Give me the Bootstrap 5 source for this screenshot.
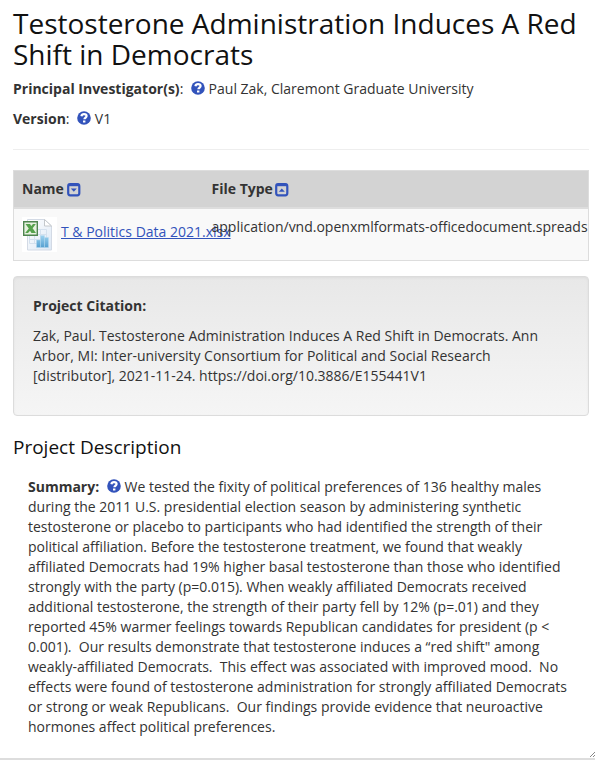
<!DOCTYPE html>
<html lang="en">
<head>
<meta charset="utf-8">
<meta name="viewport" content="width=device-width, initial-scale=1">
<title>Testosterone Administration Induces A Red Shift in Democrats</title>
<link href="https://cdn.jsdelivr.net/npm/bootstrap@5.3.0/dist/css/bootstrap.min.css" rel="stylesheet">
<style>
body { font-family: "Open Sans", sans-serif; font-size: 14px; line-height: 20px; color: #333; }
a { color: #3253bb; }
.project-page { padding: 8px 6px 21px 13px; border-bottom: 2px solid #ddd; }
.project-title { font-size: 28px; line-height: 31px; color: #111; margin-bottom: 9px; font-weight: 400; }
.meta-line { margin-bottom: 10px; }
.help-link svg { width: 14px; height: 14px; vertical-align: -1px; }
.help-link { margin-left: 4px; }
.divider { border-top: 1px solid #eee; opacity: 1; margin: 20px 0; }
.file-table { table-layout: fixed; border: 1px solid #ddd; margin-bottom: 15px; color: #333; white-space: nowrap; }
.file-table > thead > tr > th { background: #d3d3d3; padding: 8px; border-bottom: 2px solid #ddd; line-height: 20px; }
.file-table > tbody > tr > td { background: #f9f9f9; color: #333; padding: 8px; border: 0; }
.name-col { width: 190px; }
.sort-btn { line-height: 1; margin-left: -1px; }
.sort-btn svg { display: block; width: 14px; height: 14px; }
.file-icon { width: 35px; height: 35px; }
.citation { padding: 19px 19px 29px; border: 1px solid #dcdcdc; border-radius: 4px; background: linear-gradient(#e8e8e8, #f5f5f5); box-shadow: inset 0 1px 3px rgba(0,0,0,.05), 0 1px 0 rgba(255,255,255,.1); margin-bottom: 20px; }
.section-title { font-size: 19px; line-height: 22px; color: #111; font-weight: 400; margin-bottom: 19px; }
.summary { padding: 0 15px; }
.resize-grip { right: 0; bottom: 1px; width: 6px; height: 6px; }
</style>
</head>
<body>
<svg class="d-none" aria-hidden="true">
  <symbol id="help" viewBox="0 0 14 14"><circle cx="7" cy="7" r="6.8" fill="#3253bb"/><path d="M4.400 5.200C4.700 3.700 5.700 3.200 7 3.200c1.600 0 2.600.7 2.600 1.900 0 1.700-2.200 1.600-2.200 3.200" fill="none" stroke="#fff" stroke-width="2.200"/><path d="M6 9.500h2.400v2H6z" fill="#fff"/></symbol>
</svg>
<main class="project-page position-relative">
  <h1 class="project-title">Testosterone Administration Induces A Red Shift in Democrats</h1>
  <div class="meta-line"><strong>Principal Investigator(s)</strong>: <a class="help-link" href="#" aria-label="About principal investigators"><svg><use href="#help"/></svg></a> Paul Zak, Claremont Graduate University</div>
  <div class="meta-line"><strong>Version</strong>: <a class="help-link" href="#" aria-label="About version"><svg><use href="#help"/></svg></a> V1</div>
  <hr class="divider">
  <table class="table file-table">
    <thead>
      <tr>
        <th scope="col" class="name-col">Name <button type="button" class="btn p-0 border-0 sort-btn" aria-label="Sort by name descending"><svg viewBox="0 0 14 14"><rect x="1.200" y="1.200" width="11.100" height="11.100" rx="2" fill="none" stroke="#3253bb" stroke-width="2.200"/><path d="M1.500 2h10.500" stroke="#3253bb" stroke-width="2.400"/><path d="M3.800 5.500h6L6.800 8.700z" fill="#3253bb"/></svg></button></th>
        <th scope="col">File Type <button type="button" class="btn p-0 border-0 sort-btn" aria-label="Sort by file type ascending"><svg viewBox="0 0 14 14"><rect x="1.200" y="1.200" width="11.100" height="11.100" rx="2" fill="none" stroke="#3253bb" stroke-width="2.200"/><path d="M1.500 2h10.500" stroke="#3253bb" stroke-width="2.400"/><path d="M3.800 8.700h6L6.800 5.500z" fill="#3253bb"/></svg></button></th>
      </tr>
    </thead>
    <tbody>
      <tr>
        <td><div class="d-flex align-items-start gap-1"><svg class="file-icon flex-shrink-0" viewBox="0 0 35 35" aria-hidden="true">
          <defs><linearGradient id="bars" x2="0" y2="1"><stop stop-color="#9ed3f0"/><stop offset="1" stop-color="#549fd0"/></linearGradient><linearGradient id="sheet" x2="1" y2="1"><stop stop-color="#fff"/><stop offset="1" stop-color="#dde8f5"/></linearGradient></defs>
          <path d="M0 0h35v35H0z" fill="#fff"/>
          <path d="M5.500 2.500h17l7 6.500v24h-24z" fill="url(#sheet)" stroke="#d3dae5"/>
          <path d="M22.500 2.500v6.500h7z" fill="#fff" stroke="#c4c8cc"/>
          <path d="M7.500 12.500h17v14h-17zM7.500 17.500h17M7.500 22.500h17M18.500 12v14M12.500 12v14" fill="none" stroke="#d5e1ee"/>
          <path d="M14.500 23h4v7.500h-4zM18.500 18.500h4v12h-4zM22.500 20.500h4v10h-4z" fill="url(#bars)" stroke="#b9dcf0" stroke-width=".4"/>
          <path d="M1.700 4.700h13.600v13.600H1.700z" fill="#e6f1df" stroke="#4f8550" stroke-width="1.400"/>
          <path d="M3.500 7h4.500l1.300 2L11 7h2.800l-3.200 4.200 3.400 4.800H9.500l-1.500-2.300L6 16H3.200l3.600-4.600z" fill="#55a24c"/>
        </svg><a class="mt-1 pt-1 lh-1" href="#">T &amp; Politics Data 2021.xlsx</a></div></td>
        <td>application/vnd.openxmlformats-officedocument.spreads</td>
      </tr>
    </tbody>
  </table>
  <section class="citation">
    <div class="meta-line fw-bold">Project Citation:</div>
    <div>Zak, Paul. Testosterone Administration Induces A Red Shift in Democrats. Ann Arbor, MI: Inter-university Consortium for Political and Social Research [distributor], 2021-11-24. https://doi.org/10.3886/E155441V1</div>
  </section>
  <h2 class="section-title">Project Description</h2>
  <div class="summary"><strong>Summary:</strong> <a class="help-link" href="#" aria-label="About summary"><svg><use href="#help"/></svg></a> We tested the fixity of political preferences of 136 healthy males during the 2011 U.S. presidential election season by administering synthetic testosterone or placebo to participants who had identified the strength of their political affiliation. Before the testosterone treatment, we found that weakly affiliated Democrats had 19% higher basal testosterone than those who identified strongly with the party (p=0.015). When weakly affiliated Democrats received additional testosterone, the strength of their party fell by 12% (p=.01) and they reported 45% warmer feelings towards Republican candidates for president (p &lt; 0.001).&nbsp; Our results demonstrate that testosterone induces a “red shift" among weakly-affiliated Democrats.&nbsp; This effect was associated with improved mood.&nbsp; No effects were found of testosterone administration for strongly affiliated Democrats or strong or weak Republicans.&nbsp; Our findings provide evidence that neuroactive hormones affect political preferences.</div>
  <svg class="resize-grip position-absolute" viewBox="0 0 6 6" aria-hidden="true"><path d="M1 6l5-5M4 6l2-2" stroke="#888" fill="none"/></svg>
</main>
<script src="https://cdn.jsdelivr.net/npm/bootstrap@5.3.0/dist/js/bootstrap.bundle.min.js"></script>
</body>
</html>
